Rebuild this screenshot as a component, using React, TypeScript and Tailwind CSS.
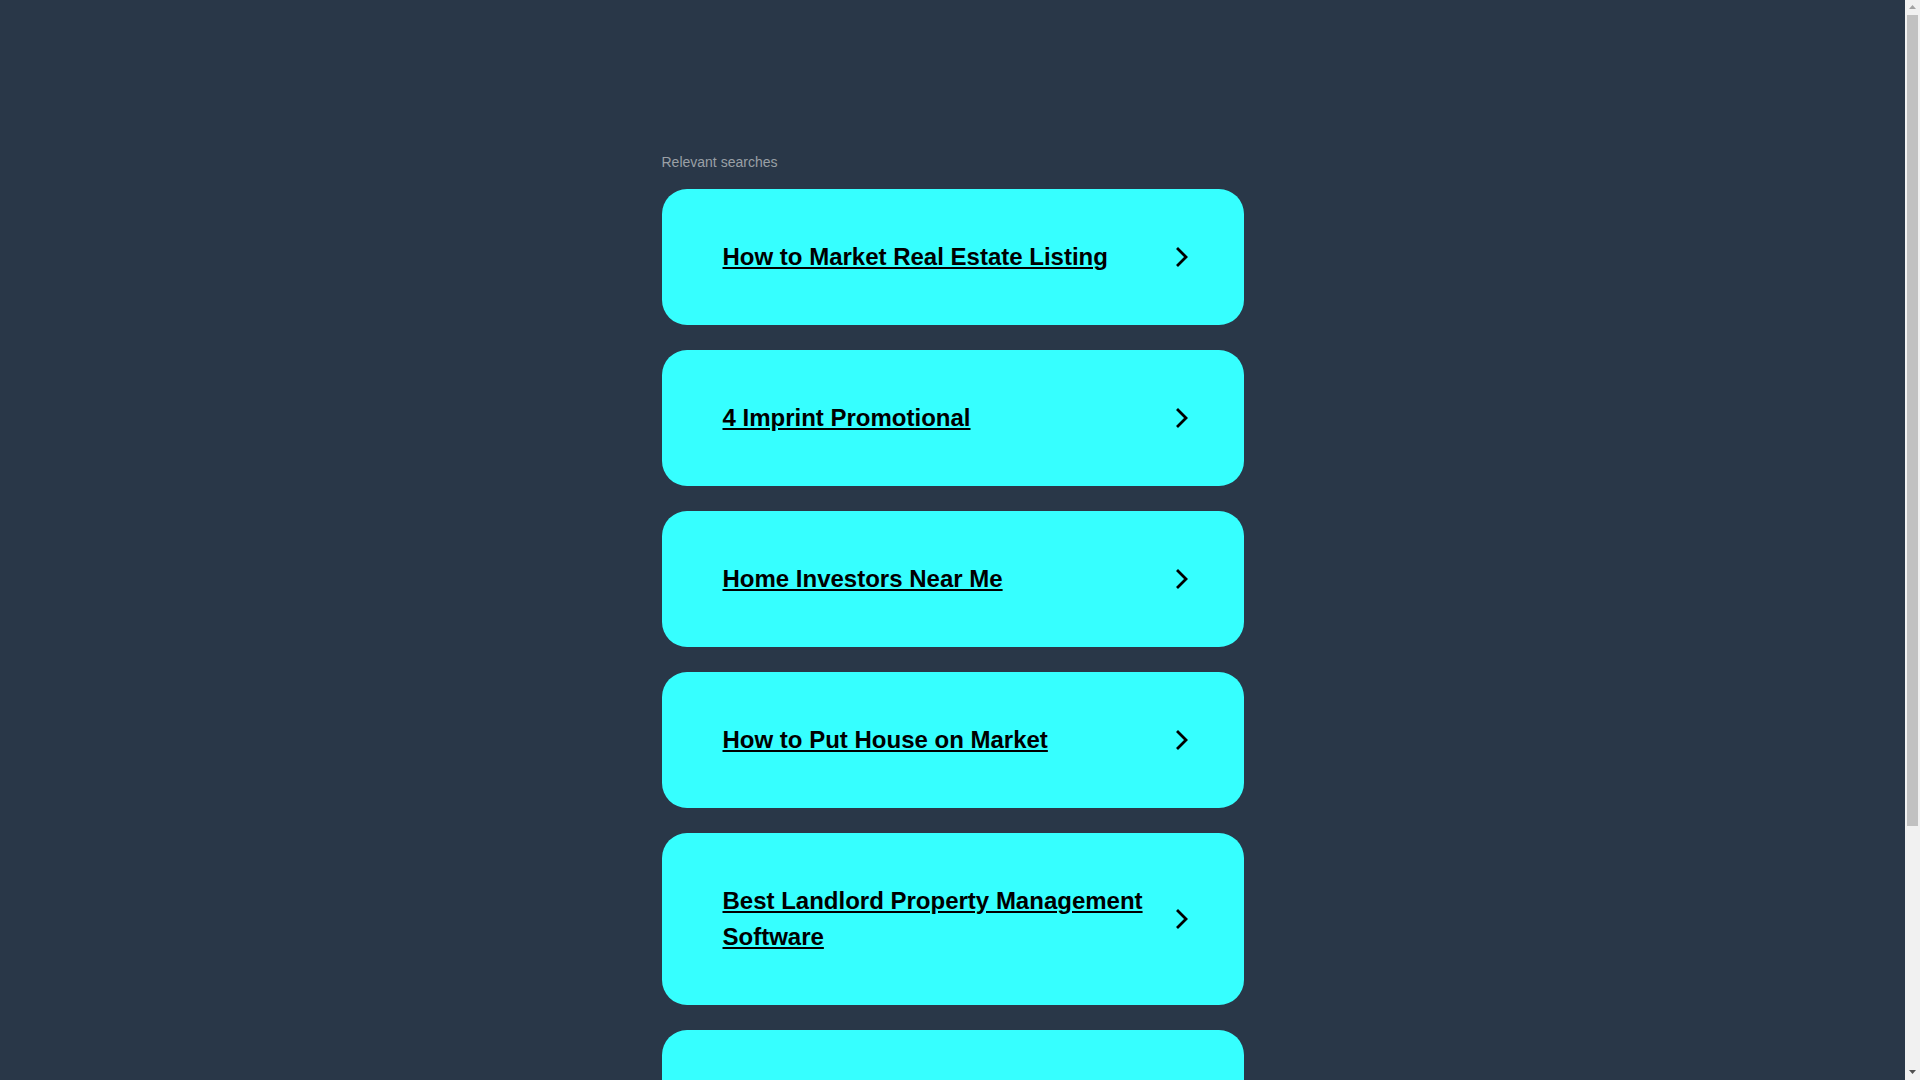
const searches = [
  'How to Market Real Estate Listing',
  '4 Imprint Promotional',
  'Home Investors Near Me',
  'How to Put House on Market',
  'Best Landlord Property Management Software',
  'Real Estate Lead Generation',
];

function Chevron() {
  return (
    <svg width="13" height="20" viewBox="0 0 13 20" fill="none" className="shrink-0">
      <path d="M2 2 L10 10 L2 18" stroke="#000" strokeWidth="2.8" strokeLinecap="square" strokeLinejoin="miter" />
    </svg>
  );
}

// the page's own scroll bar, as it shows in the frame
function ScrollBar() {
  return (
    <aside className="w-[15px] shrink-0 bg-[#f1f1f1] flex flex-col">
      <svg width="15" height="15" viewBox="0 0 15 15">
        <polygon points="4,9 7.5,5 11,9" fill="#a3a3a3" />
      </svg>
      <div className="flex-1 px-[2px]">
        <div className="h-[811px] bg-[#c1c1c1]" />
      </div>
      <svg width="15" height="15" viewBox="0 0 15 15">
        <polygon points="4,5 11,5 7.5,9" fill="#505050" />
      </svg>
    </aside>
  );
}

export default function App() {
  return (
    <div className="h-screen flex overflow-hidden bg-[#293748] font-['Liberation_Sans',Arial,sans-serif]">
      <main className="flex-1 overflow-hidden">
        <div className="w-[582px] mx-auto pt-[152px] pb-[260px]">
          <p className="text-[14px] leading-[20px] text-[#9aa0a6] mb-[17px]">Relevant searches</p>

          <div className="flex flex-col gap-[25px]">
            {searches.map((s) => (
              <a
                key={s}
                href="#"
                className="flex items-center justify-between gap-[24px] rounded-[25px] bg-[#36ffff] pl-[61px] pr-[55px] py-[50px]"
              >
                <span className="text-[24px] leading-[36px] font-bold text-black underline">{s}</span>
                <Chevron />
              </a>
            ))}
          </div>
        </div>
      </main>
      <ScrollBar />
    </div>
  );
}
